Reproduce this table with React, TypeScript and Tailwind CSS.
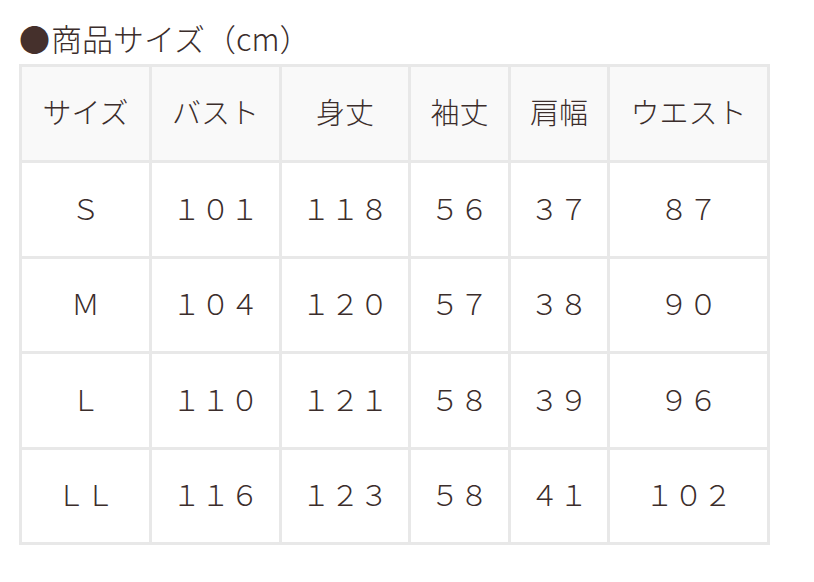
const headers = ["サイズ", "バスト", "身丈", "袖丈", "肩幅", "ウエスト"];

const rows = [
  ["Ｓ", "１０１", "１１８", "５６", "３７", "８７"],
  ["Ｍ", "１０４", "１２０", "５７", "３８", "９０"],
  ["Ｌ", "１１０", "１２１", "５８", "３９", "９６"],
  ["ＬＬ", "１１６", "１２３", "５８", "４１", "１０２"],
];

const widths = ["w-[130px]", "w-[130px]", "w-[129px]", "w-[100px]", "w-[99px]", "w-[160px]"];

export default function App() {
  return (
    <div className="min-h-[582px] bg-white pl-[19px] pt-[16px] font-['Noto_Sans_CJK_JP','Noto_Sans',sans-serif] text-[#3b2d2b]">
      <h2 className="flex h-[44px] items-center text-[31px] leading-[44px] font-normal">
        <span className="mr-[1px] text-[31px] text-[#45302c]">●</span>
        <span className="font-light">商品サイズ（cm）</span>
      </h2>
      <table className="mt-[4px] w-[751px] table-fixed border-collapse text-[29px] font-light">
        <colgroup>
          {widths.map((w, i) => (
            <col key={i} className={w} />
          ))}
        </colgroup>
        <thead>
          <tr className="h-[96px] bg-[#f9f9f9]">
            {headers.map((h) => (
              <th key={h} className="border-[3px] border-[#e8e8e8] p-0 pb-[3px] text-center font-light">
                {h}
              </th>
            ))}
          </tr>
        </thead>
        <tbody>
          {rows.map((row, r) => (
            <tr key={r} className="h-[95.5px]">
              {row.map((cell, c) => (
                <td key={c} className="border-[3px] border-[#e8e8e8] p-0 pb-[4px] text-center">
                  {cell}
                </td>
              ))}
            </tr>
          ))}
        </tbody>
      </table>
    </div>
  );
}
